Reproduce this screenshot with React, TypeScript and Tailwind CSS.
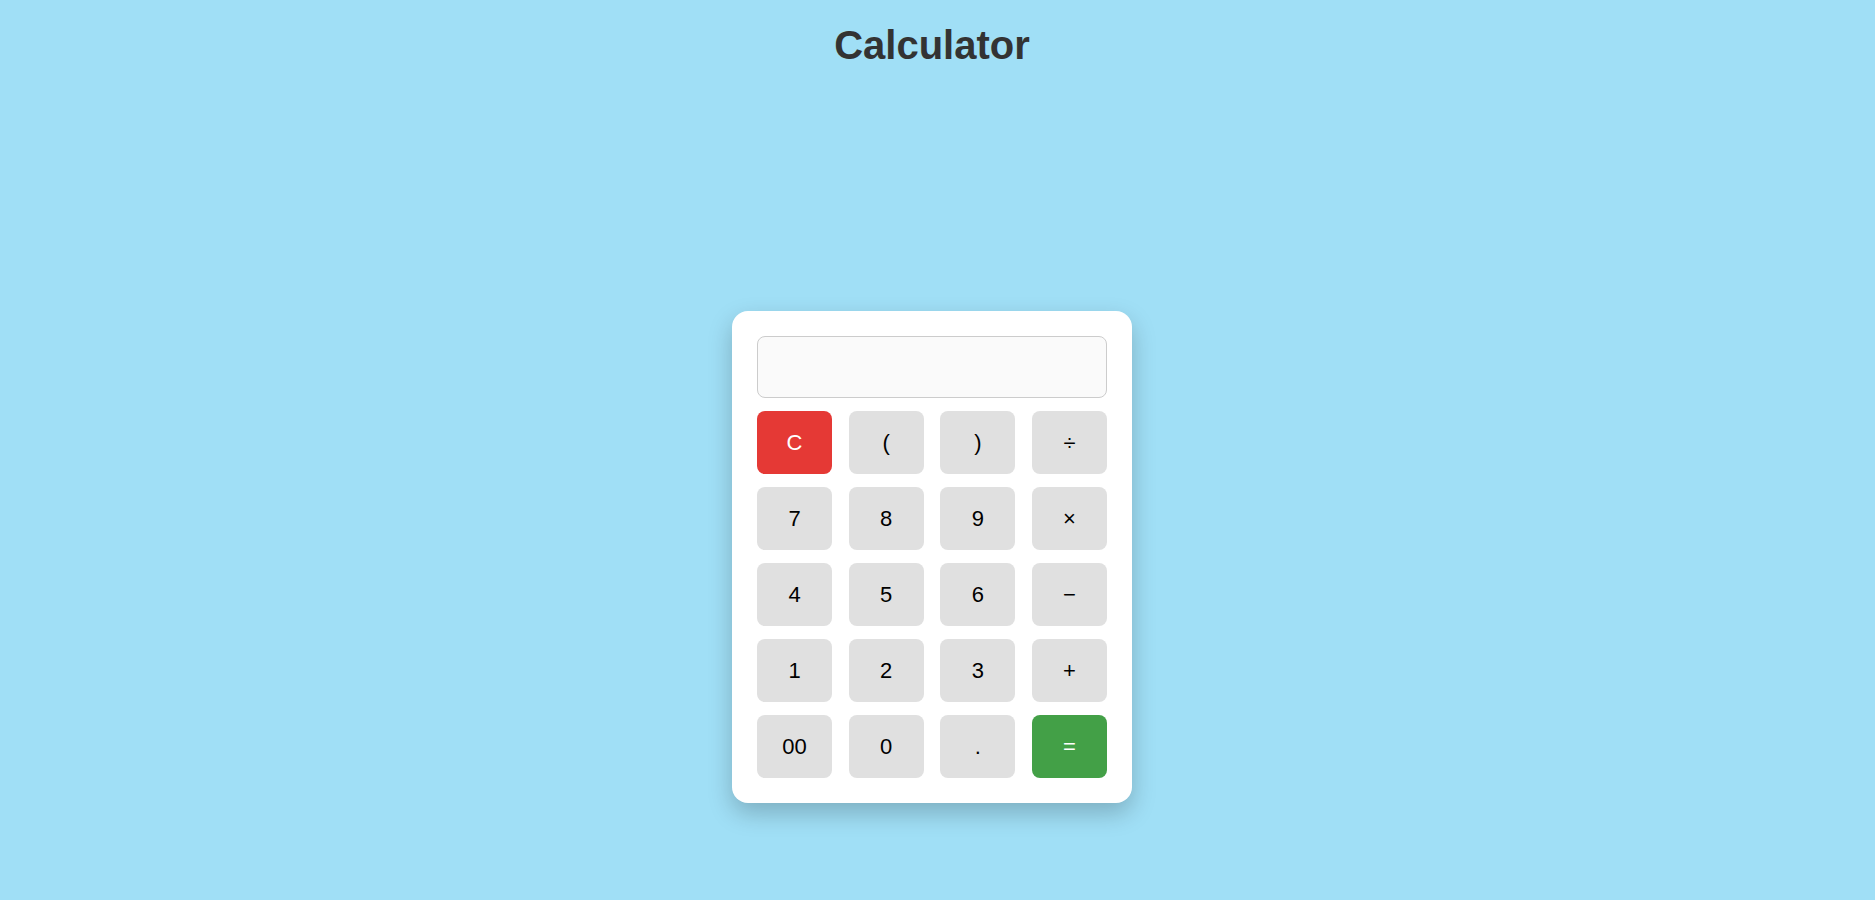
const touches: { label: string; ton?: "rouge" | "vert" }[][] = [
  [{ label: "C", ton: "rouge" }, { label: "(" }, { label: ")" }, { label: "÷" }],
  [{ label: "7" }, { label: "8" }, { label: "9" }, { label: "×" }],
  [{ label: "4" }, { label: "5" }, { label: "6" }, { label: "−" }],
  [{ label: "1" }, { label: "2" }, { label: "3" }, { label: "+" }],
  [{ label: "00" }, { label: "0" }, { label: "." }, { label: "=", ton: "vert" }],
];

function Touche({ label, ton }: { label: string; ton?: "rouge" | "vert" }) {
  const couleur =
    ton === "rouge"
      ? "bg-[#e53935] text-white"
      : ton === "vert"
        ? "bg-[#43a047] text-white"
        : "bg-[#e0e0e0] text-black";
  return (
    <button
      type="button"
      className={`flex h-[63px] w-[75px] items-center justify-center rounded-lg text-[22px] ${couleur}`}
    >
      {label}
    </button>
  );
}

export default function App() {
  return (
    <div className="min-h-screen w-full bg-[#a0dff6] font-['Liberation_Sans',Arial,sans-serif]">
      <div className="flex w-[1864px] flex-col items-center">
        <h1 className="mt-[22px] text-[40px] leading-[46px] font-bold text-[#333]">
          Calculator
        </h1>
        <div className="mt-[243px] flex w-[400px] flex-col gap-[13px] rounded-2xl bg-white p-[25px] shadow-[0_10px_25px_rgba(0,0,0,0.22)]">
          <div className="h-[62px] w-full rounded-lg border border-[#ccc] bg-[#fafafa]" />
          {touches.map((rangee, i) => (
            <div key={i} className="flex justify-between">
              {rangee.map((t) => (
                <Touche key={t.label} label={t.label} ton={t.ton} />
              ))}
            </div>
          ))}
        </div>
      </div>
    </div>
  );
}
